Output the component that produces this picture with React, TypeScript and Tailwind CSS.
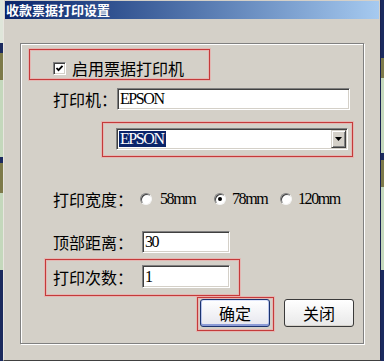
import React from "react";

const sunken =
  "bg-white border border-t-[#808080] border-l-[#808080] border-b-white border-r-white shadow-[inset_1px_1px_0_#404040,inset_-1px_-1px_0_#d4d0c8]";
const latin = "font-['Liberation_Serif','Noto_Sans_CJK_SC',serif] text-[16px] tracking-[-1.4px] text-black";

function Strip({ segs }: { segs: [number, string][] }) {
  return (
    <div className="w-[3px] h-[361px] flex flex-col shrink-0">
      {segs.map(([h, c], i) => (
        <div key={i} className="w-full shrink-0" style={{ height: h, background: c }} />
      ))}
    </div>
  );
}

function Radio({ checked }: { checked?: boolean }) {
  return (
    <div className="w-[12px] h-[12px] rounded-full bg-white border border-t-[#808080] border-l-[#808080] border-b-[#f4f4f4] border-r-[#f4f4f4] shadow-[inset_1px_1px_0_#404040] flex items-center justify-center shrink-0">
      {checked && <div className="w-[4px] h-[4px] rounded-full bg-black" />}
    </div>
  );
}

function Annot({ className }: { className: string }) {
  return (
    <div
      className={
        "absolute border border-[#c43a3a] shadow-[0_0_0_1px_rgba(240,160,160,0.55),inset_0_0_0_1px_rgba(240,160,160,0.55)] pointer-events-none " +
        className
      }
    />
  );
}

export default function App() {
  const navy = "#1b2a5e";
  const olive = "#7d7a4a";
  const green = "#c4d8bc";
  const light = "#dfe6da";
  return (
    <div className="relative w-[384px] h-[361px] flex overflow-hidden bg-[#1b2a5e] font-['Noto_Sans_CJK_SC',sans-serif] text-black">
      <Strip
        segs={[
          [43, light],
          [10, navy],
          [27, olive],
          [77, green],
          [6, navy],
          [30, olive],
          [77, green],
          [91, navy],
        ]}
      />
      <div className="w-[378px] h-[361px] flex flex-col bg-[#d4d0c8] border-l border-l-[#e8e6e0] border-r border-r-[#1a2250] border-b border-b-[#404040] px-[1px] shrink-0">
        <div className="mt-[1px] h-[18px] bg-linear-to-r from-[#0a246a] to-[#a6caf0] flex items-center pl-[1px]">
          <span className="text-[13px] font-bold text-white leading-[18px]">收款票据打印设置</span>
        </div>
        <div className="ml-[15px] mt-[24px] w-[344px] h-[301px] border border-[#808080] shadow-[inset_1px_1px_0_#fff,1px_1px_0_#fff] flex flex-col text-[16px] leading-[20px]">
          {/* row 1 */}
          <div className="mt-[13px] h-[22px] pl-[32px] flex items-center">
            <div className="w-[13px] h-[13px] bg-white border border-t-[#808080] border-l-[#808080] border-b-white border-r-white shadow-[inset_1px_1px_0_#404040,inset_-1px_-1px_0_#d4d0c8] flex items-center justify-center shrink-0">
              <svg width="9" height="9" viewBox="0 0 9 9">
                <path d="M1.5 4 L3.5 6.2 L7.5 1.8" stroke="#000" strokeWidth="1.8" fill="none" />
              </svg>
            </div>
            <span className="ml-[6px]">启用票据打印机</span>
          </div>
          {/* row 2 */}
          <div className="mt-[9px] h-[22px] pl-[32px] flex items-center">
            <span className="w-[64px] shrink-0">打印机：</span>
            <div className={"w-[233px] h-[22px] flex items-center pl-[2px] " + sunken}>
              <span className={latin}>EPSON</span>
            </div>
          </div>
          {/* row 3 */}
          <div className="mt-[18px] h-[22px] pl-[95px] flex items-center">
            <div className={"w-[232px] h-[22px] flex items-center justify-between " + sunken}>
              <span className={"ml-[2px] h-[16px] flex items-center bg-[#0a246a] pl-[1px] pr-[2px] " + latin + " text-white"}>EPSON</span>
              <div className="w-[15px] h-[18px] mr-[1px] bg-[#d4d0c8] border border-t-[#d4d0c8] border-l-[#d4d0c8] border-b-[#404040] border-r-[#404040] shadow-[inset_1px_1px_0_#fff,inset_-1px_-1px_0_#808080] flex items-center justify-center">
                <svg width="7" height="4" viewBox="0 0 7 4">
                  <path d="M0 0 H7 L3.5 4 Z" fill="#000" />
                </svg>
              </div>
            </div>
          </div>
          {/* row 4 */}
          <div className="mt-[38px] h-[22px] pl-[32px] flex items-center">
            <span className="w-[87px] shrink-0">打印宽度：</span>
            <div className="w-[74px] flex items-center gap-[8px] shrink-0">
              <Radio />
              <span className={latin}>58mm</span>
            </div>
            <div className="w-[66px] flex items-center gap-[6px] shrink-0">
              <Radio checked />
              <span className={latin}>78mm</span>
            </div>
            <div className="flex items-center gap-[6px]">
              <Radio />
              <span className={latin}>120mm</span>
            </div>
          </div>
          {/* row 5 */}
          <div className="mt-[21px] h-[22px] pl-[32px] flex items-center">
            <span className="w-[89px] shrink-0">顶部距离：</span>
            <div className={"w-[88px] h-[22px] flex items-center pl-[2px] " + sunken}>
              <span className={latin}>30</span>
            </div>
          </div>
          {/* row 6 */}
          <div className="mt-[12px] h-[23px] pl-[32px] flex items-center">
            <span className="w-[89px] shrink-0">打印次数：</span>
            <div className={"w-[88px] h-[23px] flex items-center pl-[2px] " + sunken}>
              <span className={latin}>1</span>
            </div>
          </div>
          {/* row 7 */}
          <div className="mt-[11px] h-[28px] pr-[9px] flex justify-end gap-[14px]">
            <button className="w-[70px] h-[28px] rounded-[3px] border border-[#1c3370] bg-linear-to-b from-white to-[#e6e6ee] shadow-[inset_0_-2px_0_#8c9bd6,inset_1px_0_0_#b8c4ec,inset_-1px_0_0_#b8c4ec,inset_0_1px_0_#dfe6fb] text-[16px] leading-[20px] flex items-center justify-center">
              确定
            </button>
            <button className="w-[70px] h-[28px] rounded-[3px] border border-[#3a3a3a] bg-linear-to-b from-white to-[#e8e8e8] shadow-[inset_0_-1px_0_#d6d3cc] text-[16px] leading-[20px] flex items-center justify-center">
              关闭
            </button>
          </div>
        </div>
      </div>
      <Strip
        segs={[
          [58, navy],
          [20, olive],
          [75, green],
          [7, navy],
          [27, olive],
          [83, green],
          [91, navy],
        ]}
      />
      <Annot className="left-[29px] top-[49px] w-[181px] h-[31px]" />
      <Annot className="left-[102px] top-[122px] w-[251px] h-[35px]" />
      <Annot className="left-[45px] top-[259px] w-[195px] h-[37px]" />
      <Annot className="left-[197px] top-[297px] w-[77px] h-[34px]" />
    </div>
  );
}
